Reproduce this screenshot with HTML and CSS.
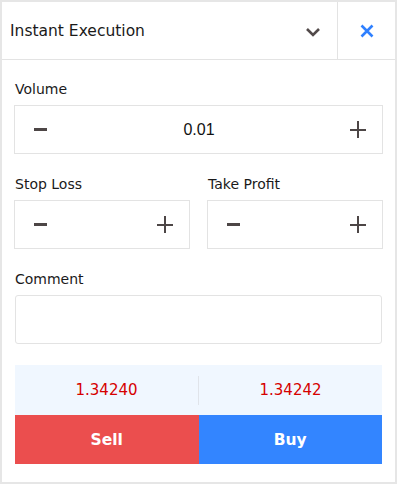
FILE: index.html
```html
<!DOCTYPE html>
<html lang="en">

<head>
    <meta charset="UTF-8">
    <meta name="viewport" content="width=device-width, initial-scale=1.0">
    <title>Instant Execution</title>

    <link rel="stylesheet" href="styles.css">

</head>

<body>
    <div class="panel">
        <!-- Header -->
        <div class="header">
            <div class="header-title">Instant Execution</div>
            <div class="header-toggle">
                <svg width="16" height="10" viewBox="0 0 16 10">
                    <path d="M2 2 L8 8 L14 2" fill="none" stroke="#524a4a" stroke-width="2.6" />
                </svg>
            </div>
            <div class="header-close">
                <svg width="14" height="14" viewBox="0 0 14 14">
                    <path d="M1.5 1.5 L12.5 12.5 M12.5 1.5 L1.5 12.5" fill="none" stroke="#2f80ff" stroke-width="2.6" />
                </svg>
            </div>
        </div>

        <div class="form">
            <!-- Volume -->
            <div class="field">
                <label class="field-label">Volume</label>
                <div class="stepper">
                    <span class="step minus"></span>
                    <span class="stepper-value">0.01</span>
                    <span class="step plus"></span>
                </div>
            </div>

            <!-- Stop loss / take profit -->
            <div class="field-row">
                <div class="field">
                    <label class="field-label">Stop Loss</label>
                    <div class="stepper">
                        <span class="step minus"></span>
                        <span class="stepper-value"></span>
                        <span class="step plus"></span>
                    </div>
                </div>
                <div class="field">
                    <label class="field-label">Take Profit</label>
                    <div class="stepper">
                        <span class="step minus"></span>
                        <span class="stepper-value"></span>
                        <span class="step plus"></span>
                    </div>
                </div>
            </div>

            <!-- Comment -->
            <div class="field">
                <label class="field-label">Comment</label>
                <div class="comment-box"></div>
            </div>

            <!-- Prices and buttons -->
            <div class="trade">
                <div class="prices">
                    <div class="price">1.34240</div>
                    <div class="price">1.34242</div>
                </div>
                <div class="buttons">
                    <div class="btn sell">Sell</div>
                    <div class="btn buy">Buy</div>
                </div>
            </div>
        </div>
    </div>
</body>

</html>
```

FILE: styles.css
```css
body {
    margin: 0;
    background-color: #e6e6e6;
    font-family: Tahoma, "DejaVu Sans", sans-serif;
    color: #1a1a1a;
}

.panel {
    margin: 2px;
    width: 393px;
    height: 480px;
    background-color: #fff;
}

/* Header */
.header {
    display: flex;
    height: 57px;
    border-bottom: 1px solid #e3e3e3;
}

.header-title {
    flex: 1;
    display: flex;
    align-items: center;
    padding-left: 8px;
    font-size: 15.5px;
}

.header-toggle {
    width: 44px;
    display: flex;
    align-items: center;
    justify-content: center;
    padding-top: 3px;
    padding-right: 2px;
}

.header-close {
    width: 57px;
    border-left: 1px solid #e3e3e3;
    display: flex;
    align-items: center;
    justify-content: center;
}

/* Form */
.form {
    padding: 19px 12px 0 12px;
    display: flex;
    flex-direction: column;
    gap: 20px;
}

.field {
    display: flex;
    flex-direction: column;
    gap: 6px;
    flex: 1;
}

.field-label {
    font-size: 14px;
    line-height: 20px;
    padding-left: 1px;
}

.field-row {
    display: flex;
    gap: 17px;
}

.stepper {
    height: 47px;
    border: 1px solid #e3e3e3;
    display: flex;
    align-items: center;
    padding: 0 17px 0 18px;
}

.stepper-value {
    flex: 1;
    text-align: center;
    font-family: "Liberation Sans", Arial, sans-serif;
    font-size: 16px;
    color: #111;
}

.step {
    position: relative;
    width: 15px;
    height: 15px;
}

.step::before,
.step::after {
    content: "";
    position: absolute;
    background-color: #4d4646;
}

.minus::before {
    left: 1px;
    top: 6px;
    width: 13px;
    height: 3px;
}

.minus::after {
    display: none;
}

.plus::before {
    left: 0;
    top: 6.5px;
    width: 16px;
    height: 2.5px;
}

.plus::after {
    left: 6.5px;
    top: -1px;
    width: 2.5px;
    height: 17px;
}

.comment-box {
    height: 47px;
    border: 1px solid #e3e3e3;
    border-radius: 3px;
    margin: 0 1px;
}

/* Trade */
.trade {
    margin: 1px 1px 0 1px;
}

.prices {
    display: flex;
    align-items: center;
    height: 50px;
    background-color: #f0f7ff;
}

.price {
    flex: 1;
    text-align: center;
    color: #d60000;
    font-size: 15px;
    line-height: 29px;
}

.price + .price {
    border-left: 1px solid #e0e4ea;
}

.buttons {
    display: flex;
    height: 49px;
}

.btn {
    flex: 1;
    display: flex;
    align-items: center;
    justify-content: center;
    color: #fff;
    font-size: 15.5px;
    font-weight: bold;
}

.sell {
    background-color: #eb4e4e;
}

.buy {
    background-color: #3385ff;
}
```
